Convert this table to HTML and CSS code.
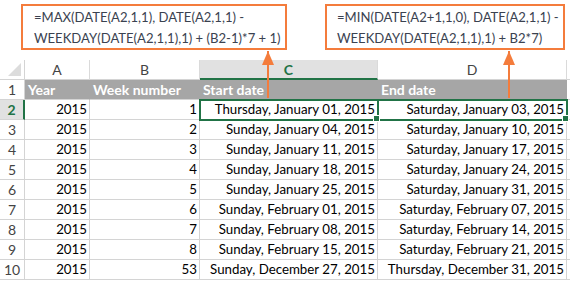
FILE: index.html
```html
<!DOCTYPE html>
<html>
<head>
<meta charset="utf-8">
<link rel="stylesheet" href="styles.css">
</head>
<body>
<div class="page">
  <div class="callouts">
    <div class="callout c1">=MAX(DATE(A2,1,1), DATE(A2,1,1) -<br>WEEKDAY(DATE(A2,1,1),1) + (B2-1)*7 + 1)</div>
    <div class="callout c2">=MIN(DATE(A2+1,1,0), DATE(A2,1,1) -<br>WEEKDAY(DATE(A2,1,1),1) + B2*7)</div>
  </div>
  <div class="sheet">
    <div class="corner"><span class="tri"></span></div>
    <div class="colh">A</div>
    <div class="colh">B</div>
    <div class="colh sel">C</div>
    <div class="colh">D</div>
    <div class="colh rest"></div>

    <div class="rowh">1</div>
    <div class="cell hd">Year</div>
    <div class="cell hd">Week number</div>
    <div class="cell hd">Start date</div>
    <div class="cell hd">End date</div>
    <div class="cell rest"></div>

    <div class="rowh selr">2</div>
    <div class="cell num">2015</div>
    <div class="cell num">1</div>
    <div class="cell num selc">Thursday, January 01, 2015</div>
    <div class="cell num selc">Saturday, January 03, 2015</div>
    <div class="cell rest"></div>

    <div class="rowh">3</div>
    <div class="cell num">2015</div>
    <div class="cell num">2</div>
    <div class="cell num">Sunday, January 04, 2015</div>
    <div class="cell num">Saturday, January 10, 2015</div>
    <div class="cell rest"></div>

    <div class="rowh">4</div>
    <div class="cell num">2015</div>
    <div class="cell num">3</div>
    <div class="cell num">Sunday, January 11, 2015</div>
    <div class="cell num">Saturday, January 17, 2015</div>
    <div class="cell rest"></div>

    <div class="rowh">5</div>
    <div class="cell num">2015</div>
    <div class="cell num">4</div>
    <div class="cell num">Sunday, January 18, 2015</div>
    <div class="cell num">Saturday, January 24, 2015</div>
    <div class="cell rest"></div>

    <div class="rowh">6</div>
    <div class="cell num">2015</div>
    <div class="cell num">5</div>
    <div class="cell num">Sunday, January 25, 2015</div>
    <div class="cell num">Saturday, January 31, 2015</div>
    <div class="cell rest"></div>

    <div class="rowh">7</div>
    <div class="cell num">2015</div>
    <div class="cell num">6</div>
    <div class="cell num">Sunday, February 01, 2015</div>
    <div class="cell num">Saturday, February 07, 2015</div>
    <div class="cell rest"></div>

    <div class="rowh">8</div>
    <div class="cell num">2015</div>
    <div class="cell num">7</div>
    <div class="cell num">Sunday, February 08, 2015</div>
    <div class="cell num">Saturday, February 14, 2015</div>
    <div class="cell rest"></div>

    <div class="rowh">9</div>
    <div class="cell num">2015</div>
    <div class="cell num">8</div>
    <div class="cell num">Sunday, February 15, 2015</div>
    <div class="cell num">Saturday, February 21, 2015</div>
    <div class="cell rest"></div>

    <div class="rowh">10</div>
    <div class="cell num">2015</div>
    <div class="cell num">53</div>
    <div class="cell num">Sunday, December 27, 2015</div>
    <div class="cell num">Thursday, December 31, 2015</div>
    <div class="cell rest"></div>
  </div>
  <div class="arrow a1"></div>
  <div class="arrow a2"></div>
</div>
</body>
</html>
```

FILE: styles.css
```css
* { box-sizing: border-box; }
html, body { margin: 0; padding: 0; background: #fff; }
body {
  font-family: Lato, "Liberation Sans", sans-serif;
  font-size: 13.3px;
  color: #000;
}
.page {
  position: relative;
  width: 570px;
  height: 281px;
  overflow: hidden;
}
.callouts {
  height: 60px;
  display: flex;
  padding: 4px 0 0 21px;
  gap: 38px;
}
.callout {
  height: 46px;
  border: 2px solid #f47c3c;
  color: #3a4250;
  font-size: 13.1px;
  line-height: 21px;
  padding: 1px 0 0 11px;
  white-space: nowrap;
}
.c1 { width: 266px; }
.c2 { width: 240px; padding-left: 10px; }

.sheet {
  display: grid;
  grid-template-columns: 25px 65px 110px 178px 189px 1fr;
  grid-auto-rows: 20px;
}
.corner {
  position: relative;
  border-right: 1px solid #d4d4d4;
  border-bottom: 1px solid #d4d4d4;
}
.tri {
  position: absolute;
  right: 3px;
  bottom: 3px;
  width: 0;
  height: 0;
  border-left: 13px solid transparent;
  border-bottom: 13px solid #dcdcdc;
}
.colh {
  text-align: center;
  line-height: 20px;
  font-size: 14px;
  color: #444;
  border-right: 1px solid #dadada;
  border-bottom: 1px solid #d4d4d4;
}
.colh.sel {
  background: #e1e1e1;
  color: #217346;
  font-weight: bold;
  border-bottom: 2px solid #217346;
}
.colh.rest { border-right: none; }
.rowh {
  text-align: center;
  line-height: 19px;
  font-size: 14px;
  color: #444;
  border-right: 1px solid #d4d4d4;
  border-bottom: 1px solid #d4d4d4;
}
.rowh.selr {
  background: #e1e1e1;
  color: #217346;
  font-weight: bold;
  border-right: 2px solid #217346;
}
.cell {
  line-height: 19px;
  padding: 0 2px 0 3px;
  white-space: nowrap;
  border-right: 1px solid #d4d4d4;
  border-bottom: 1px solid #d4d4d4;
}
.cell.rest { border-right: none; padding: 0; }
.cell.hd {
  background: #a6a6a6;
  color: #fff;
  font-weight: bold;
  font-size: 14px;
  border-right-color: #a6a6a6;
}
.num { text-align: right; }
.selc {
  position: relative;
  outline: 2px solid #217346;
  outline-offset: -1px;
}
.selc::after {
  content: "";
  position: absolute;
  right: -3px;
  bottom: -3px;
  width: 5px;
  height: 5px;
  background: #217346;
  border: 1px solid #fff;
  z-index: 2;
}
.arrow {
  position: absolute;
  top: 51px;
  width: 2px;
  height: 47px;
  background: #f47c3c;
}
.arrow::before {
  content: "";
  position: absolute;
  top: 0;
  left: -5px;
  width: 0;
  height: 0;
  border-left: 6px solid transparent;
  border-right: 6px solid transparent;
  border-bottom: 14px solid #f47c3c;
}
.a1 { left: 267px; }
.a2 { left: 508px; }
```
